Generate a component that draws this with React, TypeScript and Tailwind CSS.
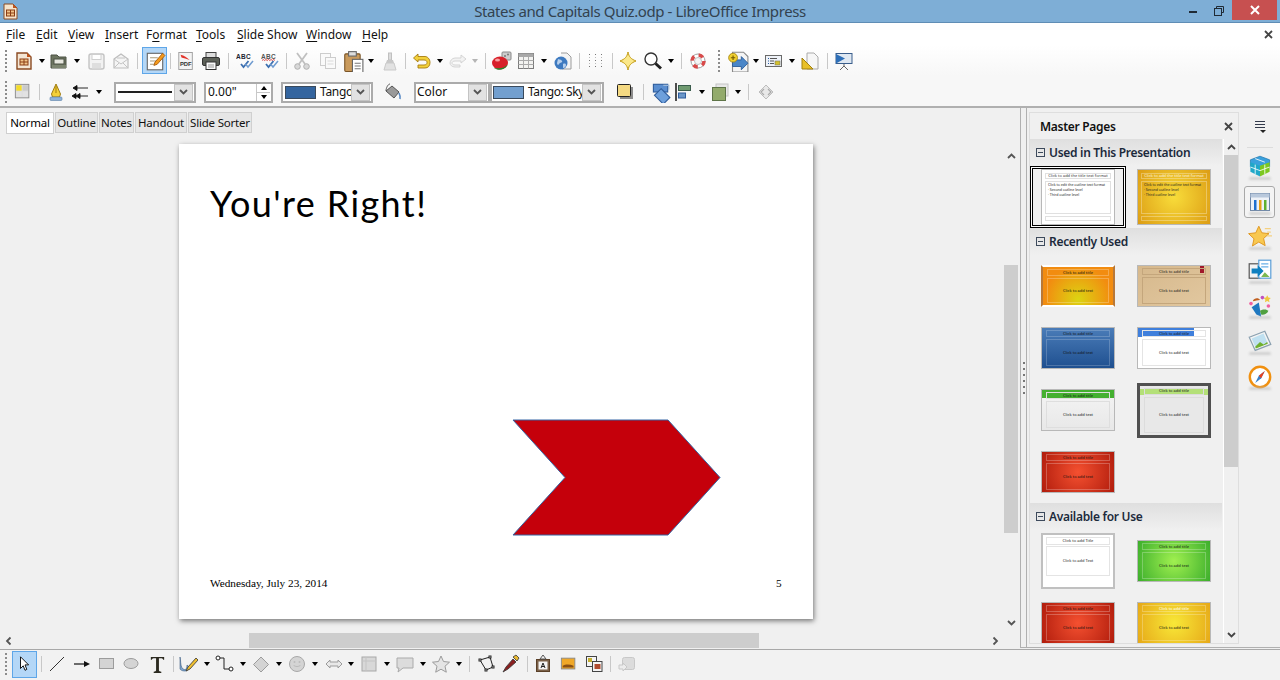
import React from "react";

const Cell = ({ w, children, className = "" }: { w: string; children?: React.ReactNode; className?: string }) => (
  <div className={`${w} h-full shrink-0 flex items-center justify-center ${className}`}>{children}</div>
);
const Arrow = ({ w, off }: { w: string; off?: boolean }) => (
  <Cell w={w}>
    <div className={`w-0 h-0 border-l-[3.5px] border-r-[3.5px] border-t-[4px] border-l-transparent border-r-transparent ${off ? "border-t-[#b5b5b5]" : "border-t-black"}`} />
  </Cell>
);
const Sep = ({ w }: { w: string }) => (
  <Cell w={w}>
    <div className="w-px h-[16px] bg-[#c8c8c8]" />
  </Cell>
);
const Handle = ({ w }: { w: string }) => (
  <Cell w={w}>
    <div className="flex flex-col gap-[2px]">
      {[0, 1, 2, 3, 4, 5].map((i) => (
        <div key={i} className="w-[2px] h-[2px] bg-[#8c8c8c]" />
      ))}
    </div>
  </Cell>
);
const S = ({ s = 20, children }: { s?: number; children: React.ReactNode }) => (
  <svg width={s} height={s} viewBox="0 0 20 20" fill="none">
    {children}
  </svg>
);

const Doc = () => (
  <S>
    <path d="M3 2h10l4 4v12H3z" fill="#f4e6d4" stroke="#8a4a22" strokeWidth="1.4" />
    <path d="M13 2l4 4h-4z" fill="#c0541c" />
    <rect x="6" y="8" width="8" height="6" fill="#f2c48a" stroke="#8a3c14" />
    <path d="M6 11h8M10 8v6" stroke="#8a3c14" />
  </S>
);
const Open = () => (
  <S>
    <path d="M2 4h6l2 2h7v11H2z" fill="#6d7560" stroke="#4c5244" />
    <rect x="5" y="8" width="10" height="5" fill="#e8e8e0" stroke="#4c5244" />
    <rect x="3" y="14" width="14" height="3" fill="#7d8570" />
  </S>
);
const Save = () => (
  <S>
    <rect x="3" y="3" width="15" height="15" rx="2" fill="#f2f2f2" stroke="#c4c4c4" strokeWidth="1.4" />
    <rect x="6" y="3.500" width="9" height="5" fill="#fff" stroke="#cfcfcf" />
    <rect x="6" y="12" width="9" height="5.500" fill="#dedede" />
  </S>
);
const Mail = () => (
  <S>
    <path d="M3 8l7-5 7 5v9H3z" fill="#f5f5f5" stroke="#bdbdbd" strokeWidth="1.2" />
    <path d="M3 8l7 5 7-5M3 17l5-5M17 17l-5-5M6 7h8" stroke="#c4c4c4" />
  </S>
);
const Edit = () => (
  <S s={22}>
    <rect x="3" y="3" width="14" height="15" fill="#fff" stroke="#666" />
    <path d="M5.500 7h7M5.500 10h6M5.500 13h4" stroke="#a89a7a" />
    <path d="M9 14l1-3 7-8 2 2-7 8z" fill="#f49a1c" stroke="#a85a08" strokeWidth=".8" />
  </S>
);
const Pdf = () => (
  <svg width="18" height="20" viewBox="0 0 20 22" fill="none">
    <rect x="2" y="1.500" width="15" height="19" fill="#f4f4f4" stroke="#9a9a9a" />
    <path d="M4 4c4 1 7 3 10 6-3-2-7-2-9-3z" fill="#e2332a" />
    <text x="3.200" y="17" fontSize="6.500" fontWeight="700" fill="#333" fontFamily="Liberation Sans">PDF</text>
  </svg>
);
const Print = () => (
  <S s={20}>
    <rect x="5" y="1.500" width="10" height="6" fill="#ddd" stroke="#444" />
    <rect x="1.500" y="6.500" width="17" height="8" rx="1.500" fill="#5c6058" stroke="#333" />
    <rect x="5" y="11" width="10" height="7.500" fill="#fafafa" stroke="#333" />
    <path d="M7 14h6M7 16h6" stroke="#999" />
  </S>
);
const Abc = ({ wave }: { wave?: boolean }) => (
  <svg width="18" height="17" viewBox="0 0 18 17" fill="none">
    <text x="0" y="6.500" fontSize="6.500" fontWeight="700" fill={wave ? "#555" : "#1c2430"} fontFamily="Liberation Sans" letterSpacing="0.300">ABC</text>
    {wave && <path d="M1 8.500l1.300-1 1.300 1 1.300-1 1.300 1 1.300-1 1.300 1 1.300-1 1.300 1 1.300-1 1.300 1" stroke="#d02020" strokeWidth=".8" />}
    <path d="M5 12l2.500 3 5-6" stroke="#3c6fb0" strokeWidth="1.800" fill="none" />
    <path d="M9.500 12l2.500 3 5-6" stroke="#6f9bd0" strokeWidth="1.500" fill="none" />
  </svg>
);
const Cut = () => (
  <S>
    <path d="M5 2l8 11M15 2L7 13" stroke="#c0c0c0" strokeWidth="1.800" />
    <circle cx="5.500" cy="15.500" r="2.800" fill="#d8d8d8" stroke="#b0b0b0" />
    <circle cx="14.500" cy="15.500" r="2.800" fill="#d8d8d8" stroke="#b0b0b0" />
  </S>
);
const Copy = () => (
  <S>
    <rect x="2.500" y="2.500" width="10" height="12" fill="#fafafa" stroke="#cdcdcd" />
    <rect x="7.500" y="6.500" width="10" height="11" fill="#fafafa" stroke="#cdcdcd" />
    <path d="M9.500 10h6M9.500 13h6" stroke="#dadada" />
  </S>
);
const Paste = () => (
  <S s={22}>
    <rect x="2.500" y="3.500" width="14" height="16" rx="1" fill="#c99a5c" stroke="#7a5426" />
    <rect x="6" y="1.500" width="7" height="4" fill="#ddd" stroke="#666" />
    <rect x="9.500" y="8.500" width="9.500" height="12" fill="#fff" stroke="#666" />
    <path d="M11.500 12h5.500M11.500 14.500h5.500M11.500 17h5.500" stroke="#777" />
  </S>
);
const Brush = () => (
  <S>
    <rect x="8.500" y="2" width="3" height="7" fill="#dcdcdc" stroke="#c0c0c0" />
    <path d="M7 9h6l1 3H6z" fill="#c8c8c8" />
    <path d="M6 12h8l2 7H4z" fill="#e2e2e2" stroke="#cacaca" />
  </S>
);
const Undo = () => (
  <S>
    <path d="M7 3L2.500 7 7 11V9h6c2 0 3 1 3 2.500S15 14 13 14H7v3h7c3 0 5-2 5-5.500S16.500 5.500 14 5.500H7z" fill="#f2d03a" stroke="#a67c10" strokeWidth=".9" />
  </S>
);
const Redo = () => (
  <S>
    <path d="M13 4l5 4-5 4v-2H7c-2 0-3 1-3 2s1 2 3 2h5v2H7c-3 0-5-2-5-4s2-5 5-5h6z" fill="#f2f2f2" stroke="#d0d0d0" strokeWidth=".9" />
  </S>
);
const Chart = () => (
  <svg width="22" height="20" viewBox="0 0 22 20" fill="none">
    <rect x="11" y="1" width="9" height="8" rx="1" fill="#ccc" stroke="#888" />
    <circle cx="14" cy="5" r="1" fill="#777" />
    <circle cx="17" cy="3.500" r="1" fill="#777" />
    <ellipse cx="9" cy="12" rx="8" ry="6.500" fill="#d8202a" />
    <path d="M3 17c4 3 10 2 13-2l1-3c-1 4-6 6-14 5z" fill="#1d8c2c" />
    <ellipse cx="6.500" cy="9" rx="2.500" ry="1.500" fill="#f8a0a0" />
  </svg>
);
const Table = () => (
  <S>
    <rect x="2.500" y="2.500" width="15" height="15" fill="#f3f3f1" stroke="#7c7c7c" />
    <rect x="2.500" y="2.500" width="15" height="3.500" fill="#a8a8a8" />
    <path d="M2.500 9.500h15M2.500 13.500h15M7.500 6v11.500M12.500 6v11.500" stroke="#aaa" />
  </S>
);
const Globe = () => (
  <S>
    <path d="M8 2h6l4 4v12H9" fill="#f4f4f4" stroke="#9c9c9c" />
    <circle cx="8" cy="12" r="6.500" fill="#3e7ac0" />
    <path d="M5 8c2 1 3 0 4 2s-2 1-3 3-2 0-2-1M10 13c2-1 3 0 3 1s-1 3-3 3z" fill="#b8d0ec" />
  </S>
);
const Grid = () => (
  <svg width="20" height="20" viewBox="0 0 20 20">
    {[3, 9, 15].map((y) => [3, 9, 15].map((x) => <rect key={`${x}-${y}`} x={x} y={y} width="1" height="1" fill="#777" />))}
    {[6, 12].map((y) => [3, 9, 15].map((x) => <rect key={`a${x}-${y}`} x={x} y={y} width="1" height="1" fill="#bbb" />))}
  </svg>
);
const Spark = () => (
  <S>
    <path d="M10 1c1 5 3 7 8 9-5 2-7 4-8 9-1-5-3-7-8-9 5-2 7-4 8-9z" fill="#fbe88a" stroke="#c29a10" />
  </S>
);
const Zoom = () => (
  <S>
    <circle cx="8" cy="8" r="6" fill="#fff" stroke="#333" strokeWidth="1.400" />
    <path d="M12.500 12.500l5.500 5" stroke="#222" strokeWidth="3" />
  </S>
);
const Help = () => (
  <S>
    <circle cx="10" cy="10" r="7" fill="#fff" stroke="#a0a0a0" strokeWidth="1" />
    <circle cx="10" cy="10" r="6" stroke="#d84a4a" strokeWidth="3.500" strokeDasharray="4.700 4.700" />
    <circle cx="10" cy="10" r="3.500" fill="#f5f5f5" stroke="#999" strokeWidth=".6" />
  </S>
);
const NavIcon = () => (
  <S s={22}>
    <path d="M5 2h10l4 4v14H5z" fill="#f5f5f5" stroke="#888" />
    <path d="M5 9h8V6l6 6-6 6v-3H5z" fill="#4a86c8" stroke="#2a5c98" strokeWidth=".8" />
    <circle cx="5.500" cy="7" r="4" fill="#f0d030" stroke="#a88810" strokeWidth=".8" />
    <path d="M3.500 7h4M5.500 5v4" stroke="#705800" />
  </S>
);
const ListBox = () => (
  <S>
    <rect x="1.500" y="4.500" width="16" height="11" fill="#eef2f8" stroke="#6a6a6a" />
    <path d="M4 7.500h1M4 10h1M4 12.500h1" stroke="#2a5ca0" />
    <path d="M6 7.500h7M6 10h4M6 12.500h4" stroke="#555" />
    <rect x="11" y="10" width="5" height="4" fill="#d4c02c" stroke="#776" strokeWidth=".6" />
  </S>
);
const Ruler = () => (
  <S s={20}>
    <path d="M7 2h7l4 4v12H7z" fill="#f6f6f6" stroke="#aaa" />
    <path d="M2 18V7l11 11z" fill="#e8c028" stroke="#a08010" />
  </S>
);
const Present = () => (
  <S s={20}>
    <rect x="2" y="2.500" width="16" height="10" fill="#dfe8f2" stroke="#3a5e8c" />
    <path d="M2 3l9 4.500-9 5z" fill="#2e6fb8" />
    <path d="M10 13v2M10 15l-4 4M10 15l4 4" stroke="#666" />
  </S>
);
const Areas = () => (
  <S s={18}>
    <rect x="1.500" y="1.500" width="15" height="15" fill="#ddd" stroke="#8a8a8a" />
    <rect x="2.500" y="2.500" width="6" height="6" fill="#f4dc28" />
    <rect x="9.500" y="2.500" width="6" height="6" fill="#cacaca" />
    <rect x="2.500" y="9.500" width="6" height="6" fill="#e2e2e2" />
    <rect x="9.500" y="9.500" width="6" height="6" fill="#e2e2e2" />
  </S>
);
const Pen = () => (
  <S>
    <path d="M10 2l4.500 10-1 3h-7l-1-3z" fill="#f4d038" stroke="#a07c10" />
    <path d="M10 4v7" stroke="#a07c10" />
    <rect x="4" y="15" width="12" height="3.500" rx="1" fill="#8fb2d8" stroke="#5a80a8" strokeWidth=".6" />
  </S>
);
const ArrowStyles = () => (
  <S>
    <path d="M3 6l4-2.500v5zM7 6h11M2 14l4-2.500v5zM6 14l4-2.500v5zM10 14h8" fill="#111" stroke="#111" strokeWidth=".9" />
  </S>
);
const Bucket = () => (
  <S>
    <path d="M4 9l6-5 7 6-5 6z" fill="#9a9a9a" stroke="#555" />
    <path d="M4 9c0-3 2-7 4-7" stroke="#555" />
    <path d="M17 11c1 2 1.500 4 1 6" stroke="#5a8ac4" strokeWidth="1.600" />
  </S>
);
const Shadow = () => (
  <S>
    <rect x="5" y="5" width="13" height="12" fill="#8c8c8c" />
    <rect x="2.500" y="2.500" width="13" height="12" rx="1" fill="#f4d982" stroke="#222" />
  </S>
);
const Rotate = () => (
  <S s={22}>
    <rect x="4" y="3" width="13" height="7" fill="#5a8ed0" stroke="#2e5c9c" />
    <path d="M11 7l8 8-6 6-8-8z" fill="#6ea0dc" stroke="#2e5c9c" />
    <path d="M13 4h5v4" stroke="#9cb8d8" />
  </S>
);
const Align = () => (
  <S>
    <path d="M3 1v18" stroke="#222" strokeWidth="1.600" />
    <rect x="5.500" y="3.500" width="12" height="5" fill="#6f9a70" stroke="#3a5c4c" />
    <rect x="5.500" y="11" width="7" height="5" fill="#6a96c8" stroke="#2e5c9c" />
  </S>
);
const Arrange = () => (
  <S>
    <rect x="6" y="2" width="12" height="12" fill="#e8e8e8" stroke="#c4c4c4" />
    <rect x="2.500" y="5.500" width="13" height="13" fill="#93ab6c" stroke="#5e7448" />
  </S>
);
const Glue = () => (
  <S>
    <path d="M10 3l7 7-7 7-7-7z" fill="#e8e8e8" stroke="#bdbdbd" />
    <path d="M8 7l-3 3 3 3M12 7l3 3-3 3" stroke="#aaa" fill="none" strokeWidth="1.200" />
  </S>
);

const Chev = ({ c = "#555" }: { c?: string }) => (
  <svg width="9" height="6" viewBox="0 0 9 6" fill="none">
    <path d="M1 1l3.500 3.500L8 1" stroke={c} strokeWidth="1.800" />
  </svg>
);
const Drop = () => (
  <div className="w-[19px] h-[17px] mr-[1px] bg-[#e2e2e2] border border-[#c4c4c4] flex items-center justify-center shrink-0">
    <Chev />
  </div>
);

const Thumb = ({ size = "w-[74px] h-[42px]", bc = "border border-[#b8b8b8]", bg, title, body, tc = "text-[#111]", frame = "border-white/25", inner }: { size?: string; bc?: string; bg: string; title: string; body: string; tc?: string; frame?: string; inner?: React.ReactNode }) => (
  <div className={`${size} ${bg} ${bc} flex flex-col items-stretch px-[4px] py-[2px] gap-[2px] overflow-hidden relative`}>
    {inner}
    <div className={`h-[7px] border ${frame} flex items-center justify-center text-[4px] leading-none ${tc} relative`}>{title}</div>
    <div className={`flex-1 border ${frame} flex items-center justify-center text-[4px] leading-none text-[#111] relative`}>{body}</div>
  </div>
);
const SecHead = ({ t }: { t: string }) => (
  <div className="h-[27px] shrink-0 bg-gradient-to-b from-[#dfdfdf] to-[#f0f0f0] flex items-center pl-[6px]">
    <div className="w-[9px] h-[9px] border border-[#3d4a5c] flex items-center justify-center">
      <div className="w-[5px] h-px bg-[#3d4a5c]" />
    </div>
    <span className="ml-[4px] text-[12px] font-semibold tracking-[-0.3px] text-[#1c2a3c]">{t}</span>
  </div>
);
const Row = ({ children }: { children: React.ReactNode }) => <div className="h-[62px] shrink-0 flex">{children}</div>;
const Slot = ({ children }: { children?: React.ReactNode }) => <div className="w-[96px] flex items-center justify-center">{children}</div>;

const DeckBox = ({ active, children }: { active?: boolean; children: React.ReactNode }) => (
  <div className={`w-[31px] h-[32px] shrink-0 flex flex-col items-center justify-center rounded-[3px] ${active ? "border border-[#a8a8a8] bg-[#f4f4f4]" : ""}`}>
    {children}
    <div className="w-[22px] h-[3px] -mt-[2px] rounded-full bg-[#bdbdbd]/60 blur-[1px]" />
  </div>
);

const Menu = ({ w, pre = "", u, post = "" }: { w: string; pre?: string; u: string; post?: string }) => (
  <div className={`${w} shrink-0`}>
    {pre}
    <span className="underline underline-offset-2">{u}</span>
    {post}
  </div>
);

const Tab = ({ w, t, active }: { w: string; t: string; active?: boolean }) => (
  <div className={`${w} shrink-0 flex items-center justify-center text-[11.5px] tracking-[-0.2px] whitespace-nowrap border border-[#d0d0d0] ${active ? "h-[22px] bg-white text-black" : "h-[21px] bg-[#e6e6e6] text-[#111]"}`}>{t}</div>
);

const Select = ({ w, children }: { w: string; children: React.ReactNode }) => (
  <div className={`${w} h-[21px] shrink-0 border-2 border-[#ababab] bg-white flex items-center overflow-hidden`}>
    <div className="flex-1 min-w-0 flex items-center overflow-hidden whitespace-nowrap h-full">{children}</div>
    <Drop />
  </div>
);

export default function App() {
  return (
    <div className="w-[1280px] h-[680px] overflow-hidden flex flex-col bg-[#f0f0f0] text-black font-['Noto_Sans',sans-serif]">
      {/* title bar */}
      <div className="h-[23px] shrink-0 bg-[#7eaed6] border-b border-[#5f8db5] flex items-center">
        <div className="w-[20px] pl-[3px] flex items-center">
          <svg width="15" height="17" viewBox="0 0 15 17" fill="none">
            <path d="M1 1h9l4 4v11H1z" fill="#f6e4cc" stroke="#8a4a22" />
            <path d="M10 1l4 4h-4z" fill="#c0541c" />
            <rect x="3.500" y="7" width="8" height="6" fill="#f2c48a" stroke="#8a3c14" />
            <path d="M3.500 10h8M7.500 7v6" stroke="#8a3c14" />
          </svg>
        </div>
        <div className="flex-1 pl-[80px] text-center text-[15px] leading-none text-[#33424f] tracking-[-0.4px] whitespace-nowrap">States and Capitals Quiz.odp - LibreOffice Impress</div>
        <div className="flex items-start h-full self-start">
          <div className="w-[26px] h-[21px] flex items-center justify-center">
            <div className="w-[8px] h-[2px] bg-[#1f2a35] mt-[3px]" />
          </div>
          <div className="w-[26px] h-[21px] flex items-center justify-center">
            <svg width="10" height="10" viewBox="0 0 10 10" fill="none">
              <path d="M2.500 2.500V.5h7v6H7.500" stroke="#1f2a35" />
              <rect x=".5" y="2.500" width="7" height="7" stroke="#1f2a35" />
            </svg>
          </div>
          <div className="w-[45px] h-[20px] bg-[#c75050] flex items-center justify-center">
            <svg width="10" height="10" viewBox="0 0 10 10" fill="none">
              <path d="M1 1l8 8M9 1L1 9" stroke="#fff" strokeWidth="2" />
            </svg>
          </div>
          <div className="w-[3px]" />
        </div>
      </div>
      {/* menu */}
      <div className="h-[22px] shrink-0 bg-white flex items-center pl-[6px] pr-[7px] pt-[1px] text-[12px] text-[#111]">
        <Menu w="w-[30px]" u="F" post="ile" />
        <Menu w="w-[32px]" u="E" post="dit" />
        <Menu w="w-[37px]" u="V" post="iew" />
        <Menu w="w-[41px]" u="I" post="nsert" />
        <Menu w="w-[50px]" pre="F" u="o" post="rmat" />
        <Menu w="w-[41px]" u="T" post="ools" />
        <Menu w="w-[69px]" u="S" post="lide Show" />
        <Menu w="w-[56px]" u="W" post="indow" />
        <Menu w="w-[40px]" u="H" post="elp" />
        <div className="flex-1" />
        <svg width="9" height="9" viewBox="0 0 9 9" fill="none">
          <path d="M1 1l7 7M8 1L1 8" stroke="#444" strokeWidth="1.800" />
        </svg>
      </div>
      {/* toolbar 1 */}
      <div className="h-[31px] shrink-0 bg-gradient-to-b from-white to-[#f7f7f7] flex items-center">
        <Handle w="w-[12px]" />
        <Cell w="w-[24px]"><Doc /></Cell>
        <Arrow w="w-[11px]" />
        <Cell w="w-[24px]"><Open /></Cell>
        <Arrow w="w-[12px]" />
        <Cell w="w-[26px]"><Save /></Cell>
        <Cell w="w-[24px]"><Mail /></Cell>
        <Sep w="w-[9px]" />
        <Cell w="w-[25px]"><div className="w-[25px] h-[27px] bg-[#b4d7f7] border border-[#5ea6e8] flex items-center justify-center"><Edit /></div></Cell>
        <Sep w="w-[6px]" />
        <Cell w="w-[26px]"><Pdf /></Cell>
        <Cell w="w-[24px]"><Print /></Cell>
        <Sep w="w-[10px]" />
        <Cell w="w-[24px]"><Abc /></Cell>
        <Cell w="w-[26px]"><Abc wave /></Cell>
        <Sep w="w-[6px]" />
        <Cell w="w-[26px]"><Cut /></Cell>
        <Cell w="w-[26px]"><Copy /></Cell>
        <Cell w="w-[24px]"><Paste /></Cell>
        <Arrow w="w-[12px]" />
        <Cell w="w-[26px]"><Brush /></Cell>
        <Sep w="w-[5px]" />
        <Cell w="w-[26px]"><Undo /></Cell>
        <Arrow w="w-[11px]" />
        <Cell w="w-[25px]"><Redo /></Cell>
        <Arrow w="w-[10px]" off />
        <Sep w="w-[10px]" />
        <Cell w="w-[24px]"><Chart /></Cell>
        <Cell w="w-[24px]"><Table /></Cell>
        <Arrow w="w-[12px]" />
        <Cell w="w-[26px]"><Globe /></Cell>
        <Sep w="w-[6px]" />
        <Cell w="w-[28px]"><Grid /></Cell>
        <Sep w="w-[4px]" />
        <Cell w="w-[28px]"><Spark /></Cell>
        <Cell w="w-[22px]"><Zoom /></Cell>
        <Arrow w="w-[14px]" />
        <Sep w="w-[6px]" />
        <Cell w="w-[28px]"><Help /></Cell>
        <Handle w="w-[14px]" />
        <Cell w="w-[24px]"><NavIcon /></Cell>
        <Arrow w="w-[12px]" />
        <Cell w="w-[24px]"><ListBox /></Cell>
        <Arrow w="w-[12px]" />
        <Cell w="w-[24px]"><Ruler /></Cell>
        <Sep w="w-[10px]" />
        <Cell w="w-[24px]"><Present /></Cell>
      </div>
      {/* toolbar 2 */}
      <div className="h-[32px] pt-[2px] shrink-0 bg-[#f7f7f7] border-b-2 border-[#b0b0b0] flex items-center text-[12px] text-[#111]">
        <Handle w="w-[12px]" />
        <Cell w="w-[22px]"><Areas /></Cell>
        <Sep w="w-[11px]" />
        <Cell w="w-[22px]"><Pen /></Cell>
        <Cell w="w-[26px]"><ArrowStyles /></Cell>
        <Arrow w="w-[11px]" />
        <div className="w-[10px]" />
        <Select w="w-[82px]">
          <div className="w-full h-[2px] bg-[#222] ml-[2px] mr-[2px]" />
        </Select>
        <div className="w-[8px]" />
        <div className="w-[69px] h-[21px] shrink-0 border-2 border-[#ababab] bg-white flex items-center pl-[2px]">
          <span className="flex-1">0.00"</span>
          <div className="w-[14px] h-full border-l border-[#c8c8c8] flex flex-col items-center justify-center gap-[2px] mr-[1px]">
            <div className="w-0 h-0 border-l-[3.5px] border-r-[3.5px] border-b-[4px] border-l-transparent border-r-transparent border-b-black" />
            <div className="w-full h-px bg-[#c8c8c8]" />
            <div className="w-0 h-0 border-l-[3.5px] border-r-[3.5px] border-t-[4px] border-l-transparent border-r-transparent border-t-black" />
          </div>
        </div>
        <div className="w-[8px]" />
        <Select w="w-[92px]">
          <div className="w-[31px] h-[13px] ml-[2px] mr-[4px] bg-[#34659f] border border-[#3a4a5c] shrink-0" />
          <span className="tracking-[-0.3px]">Tango</span>
        </Select>
        <Cell w="w-[41px]" className="pr-[3px]"><Bucket /></Cell>
        <Select w="w-[76px]">
          <span className="pl-[1px]">Color</span>
        </Select>
        <Select w="w-[114px]">
          <div className="w-[31px] h-[13px] ml-[1px] mr-[4px] bg-[#729fcf] border border-[#3a4a5c] shrink-0" />
          <span className="tracking-[-0.4px]">Tango: Sky</span>
        </Select>
        <div className="w-[9px]" />
        <Cell w="w-[24px]"><Shadow /></Cell>
        <Sep w="w-[12px]" />
        <Cell w="w-[22px]"><Rotate /></Cell>
        <Cell w="w-[24px]"><Align /></Cell>
        <Arrow w="w-[14px]" />
        <Cell w="w-[22px]"><Arrange /></Cell>
        <Arrow w="w-[14px]" />
        <Sep w="w-[6px]" />
        <Cell w="w-[30px]"><Glue /></Cell>
      </div>
      {/* main */}
      <div className="h-[542px] shrink-0 flex border-b border-[#a8a8a8]">
        {/* editor */}
        <div className="w-[1020px] shrink-0 flex flex-col">
          <div className="h-[26px] shrink-0 pl-[6px] pt-[4px] flex items-start gap-px">
            <Tab w="w-[48px]" t="Normal" active />
            <Tab w="w-[43px]" t="Outline" />
            <Tab w="w-[35px]" t="Notes" />
            <Tab w="w-[52px]" t="Handout" />
            <Tab w="w-[64px]" t="Slide Sorter" />
          </div>
          <div className="h-[499px] shrink-0 flex">
            <div className="w-[1004px] shrink-0 pl-[179px] pt-[10px]">
              <div className="w-[634px] h-[475px] bg-white shadow-[1px_2px_5px_rgba(0,0,0,0.5)] relative">
                <div className="absolute left-[31px] top-[36px] text-[36px] leading-[46px] text-black font-['Lato',sans-serif] tracking-[1.4px] whitespace-nowrap">You're Right!</div>
                <svg className="absolute left-[333px] top-[275px]" width="209" height="118" viewBox="0 0 209 118">
                  <path d="M1 1H156L208 58.500 156 116H1L53 58.500z" fill="#c5000b" stroke="#3465a4" strokeWidth="1" />
                </svg>
                <div className="absolute left-[31px] top-[431px] text-[11.25px] leading-[16px] font-['Liberation_Serif',serif] whitespace-nowrap">Wednesday, July 23, 2014</div>
                <div className="absolute left-[597px] top-[431px] text-[11.25px] leading-[16px] font-['Liberation_Serif',serif]">5</div>
              </div>
            </div>
            <div className="w-[14px] shrink-0 flex flex-col items-center">
              <div className="h-[16px]" />
              <div className="h-[12px] flex items-center rotate-180"><Chev /></div>
              <div className="h-[103px] shrink-0" />
              <div className="w-full h-[268px] shrink-0 bg-[#cdcdcd]" />
              <div className="h-[84px] shrink-0" />
              <div className="h-[12px] flex items-center"><Chev /></div>
            </div>
          </div>
          <div className="h-[15px] shrink-0 flex items-center">
            <div className="w-[249px] shrink-0 pl-[4px]">
              <div className="w-[9px] flex justify-center rotate-90"><Chev /></div>
            </div>
            <div className="w-[510px] h-[15px] shrink-0 bg-[#cdcdcd]" />
            <div className="w-[232px]" />
            <div className="w-[9px] flex justify-center -rotate-90"><Chev /></div>
          </div>
        </div>
        <div className="h-[540px] shrink-0 flex border-b border-[#b0b0b0]">
          {/* splitter */}
          <div className="w-[9px] shrink-0 flex items-center pl-[1px] border-l border-[#b0b0b0]">
            <div className="h-full w-[5px] border-r border-[#b0b0b0] flex flex-col items-center justify-center gap-[4px]">
              {[0, 1, 2, 3, 4, 5].map((i) => (
                <div key={i} className="w-[2px] h-[2px] bg-[#777]" />
              ))}
            </div>
          </div>
          {/* panel */}
          <div className="w-[210px] shrink-0 mt-[4px] mb-[3px] border border-[#dedede] flex flex-col">
            <div className="h-[26px] shrink-0 pt-[1px] flex items-center pl-[10px] pr-[5px] text-[12px] font-semibold tracking-[-0.3px] text-[#111]">
              <span className="flex-1">Master Pages</span>
              <svg width="9" height="9" viewBox="0 0 9 9" fill="none">
                <path d="M1 1l7 7M8 1L1 8" stroke="#444" strokeWidth="1.800" />
              </svg>
            </div>
            <div className="flex-1 min-h-0 flex overflow-hidden">
              <div className="w-[192px] shrink-0 flex flex-col overflow-hidden">
                <SecHead t="Used in This Presentation" />
                <Row>
                  <Slot>
                    <div className="w-[96px] h-[62px] border border-black flex items-center justify-center">
                      <div className="w-[94px] h-[60px] border border-white flex items-center justify-center">
                        <div className="w-[92px] h-[58px] border border-black flex items-center justify-center">
                          <div className="w-[74px] h-[56px] bg-white border border-[#b8b8b8] flex flex-col px-[3px] py-[3px] gap-[2px] overflow-hidden">
                            <div className="h-[6px] border border-[#e0e0e0] text-[4px] leading-none text-center text-[#333] whitespace-nowrap">Click to add the title text format</div>
                            <div className="flex-1 border border-[#e0e0e0] text-[3.500px] leading-[5px] text-[#222] pl-[2px]">Click to edit the outline text format<br />· Second outline level<br />· Third outline level</div>
                            <div className="h-[5px] border border-[#e0e0e0]" />
                          </div>
                        </div>
                      </div>
                    </div>
                  </Slot>
                  <Slot>
                    <div className="w-[74px] h-[56px] bg-[radial-gradient(circle,#f8dc3a,#dc9c14)] border border-[#b8b8b8] flex flex-col px-[3px] py-[3px] gap-[2px] overflow-hidden">
                      <div className="h-[6px] border border-white/30 text-[4px] leading-none text-center text-white/80 whitespace-nowrap">Click to add the title text format</div>
                      <div className="flex-1 border border-white/30 text-[3.500px] leading-[5px] text-[#222] pl-[2px]">Click to edit the outline text format<br />· Second outline level<br />· Third outline level</div>
                      <div className="h-[5px] border border-white/30" />
                    </div>
                  </Slot>
                </Row>
                <SecHead t="Recently Used" />
                <Row>
                  <Slot>
                    <Thumb bg="bg-[radial-gradient(circle_at_50%_85%,#dcd412,#f28c10_70%)]" bc="border-2 border-l-[#b87838] border-r-[#b87838] border-t-white border-b-white" title="Click to add title" body="Click to add text" />
                  </Slot>
                  <Slot>
                    <Thumb bg="bg-gradient-to-br from-[#d6b88c] to-[#e2c8a0]" title="Click to add title" body="Click to add text" frame="border-[#c4a67c]" inner={<div className="absolute right-[6px] top-0 w-[4px] h-[7px] bg-[#a0182a]" />} />
                  </Slot>
                </Row>
                <Row>
                  <Slot><Thumb bg="bg-gradient-to-b from-[#4a7cb8] to-[#1f5090]" title="Click to add title" body="Click to add text" frame="border-white/20" /></Slot>
                  <Slot><Thumb bg="bg-white" title="Click to add title" body="Click to add text" frame="border-[#e4e4e4]" inner={<div className="absolute left-0 top-0 w-[56px] h-[9px] bg-[#3f7fdc]" />} /></Slot>
                </Row>
                <Row>
                  <Slot><Thumb bg="bg-gradient-to-b from-[#f4f4f4] to-[#e8e8e8]" title="Click to add title" body="Click to add text" frame="border-[#dedede]" inner={<div className="absolute left-0 top-0 w-full h-[8px] bg-[#44b030]" />} /></Slot>
                  <Slot><Thumb size="w-[74px] h-[55px]" bc="border-[3px] border-[#505050]" bg="bg-[#e8e8e8]" title="Click to add title" body="Click to add text" frame="border-[#dcdcdc]" inner={<div className="absolute left-0 top-[3px] w-full h-[6px] bg-[#b4e078]" />} /></Slot>
                </Row>
                <Row>
                  <Slot><Thumb bg="bg-[radial-gradient(circle,#f45030,#b01c0c)]" title="Click to add title" body="Click to add text" /></Slot>
                  <Slot />
                </Row>
                <SecHead t="Available for Use" />
                <Row>
                  <Slot>
                    <div className="w-[74px] h-[56px] bg-white border-2 border-[#c0c0c0] flex flex-col px-[3px] py-[2px] gap-[1px]">
                      <div className="h-[8px] border border-[#e4e4e4] text-[4px] leading-none flex items-center justify-center text-[#222]">Click to add Title</div>
                      <div className="h-[30px] border border-[#e4e4e4] text-[4px] leading-none flex items-center justify-center text-[#222]">Click to add Text</div>
                    </div>
                  </Slot>
                  <Slot><Thumb bg="bg-[radial-gradient(circle,#a0f050,#3cae2c)]" title="Click to add title" body="Click to add text" /></Slot>
                </Row>
                <Row>
                  <Slot><Thumb bg="bg-[radial-gradient(circle,#f45030,#b01c0c)]" title="Click to add title" body="Click to add text" /></Slot>
                  <Slot><Thumb bg="bg-[radial-gradient(circle,#f8e838,#e6a818)]" title="Click to add title" tc="text-white" body="Click to add text" /></Slot>
                </Row>
              </div>
              <div className="w-[15px] ml-px shrink-0 border-l border-white flex flex-col items-center">
                <div className="h-[16px] shrink-0 flex items-center rotate-180"><Chev c="#444" /></div>
                <div className="w-full h-[312px] shrink-0 bg-[#cdcdcd]" />
                <div className="flex-1" />
                <div className="h-[16px] shrink-0 flex items-center"><Chev c="#444" /></div>
              </div>
            </div>
          </div>
          {/* deck */}
          <div className="w-[41px] shrink-0 flex flex-col items-center pt-[9px]">
            <div className="h-[20px] shrink-0 flex flex-col items-center justify-center gap-[2px]">
              <div className="w-[10px] h-px bg-[#333a4c]" />
              <div className="w-[10px] h-px bg-[#333a4c]" />
              <div className="w-[10px] h-px bg-[#333a4c]" />
              <div className="w-0 h-0 ml-[6px] border-l-[3px] border-r-[3px] border-t-[3px] border-l-transparent border-r-transparent border-t-[#222]" />
            </div>
            <div className="w-[26px] h-px shrink-0 bg-[#dcdcdc] mt-[10px] mb-[3px]" />
            <DeckBox>
              <S s={24}>
                <path d="M10 1l8 3v6l-8 3-8-3V4z" fill="#3aa0dc" stroke="#1e78b0" strokeWidth=".6" />
                <path d="M10 9l8-3v8l-8 4z" fill="#7cc820" />
                <path d="M2 6l8 3v9l-8-4z" fill="#20a8c8" />
                <path d="M6 3l8 3M6 8v8M14 8v8M2 10l8 3 8-3" stroke="#fff" strokeWidth=".7" />
              </S>
            </DeckBox>
            <div className="h-[3px] shrink-0" />
            <DeckBox active>
              <svg width="24" height="24" viewBox="0 0 24 24" fill="none">
                <rect x="2.500" y="3.500" width="19" height="17" fill="#eef2f8" stroke="#7088a8" />
                <rect x="2.500" y="3.500" width="19" height="4" fill="#b8c8dc" />
                <rect x="6" y="10" width="2.500" height="10" fill="#2070d0" />
                <rect x="11" y="10" width="2.500" height="10" fill="#e8a018" />
                <rect x="16" y="10" width="2.500" height="10" fill="#60b030" />
              </svg>
            </DeckBox>
            <div className="h-[3px] shrink-0" />
            <DeckBox>
              <S s={24}>
                <path d="M9 1l2.500 5.500 6 .7-4.500 4 1.300 6L9 14.200 3.700 17.500 5 11.500.5 7.200l6-.7z" fill="#f8c850" stroke="#e09820" strokeWidth=".8" />
                <path d="M14 3h5M16 6h3M16 9h4" stroke="#f4d080" />
              </S>
            </DeckBox>
            <div className="h-[2px] shrink-0" />
            <DeckBox>
              <S s={24}>
                <rect x="1" y="4" width="9" height="12" fill="#f4f4f4" stroke="#555" />
                <rect x="9" y="1" width="10" height="15" fill="#fff" stroke="#5a9ed8" />
                <path d="M11 4h6M11 6.500h6" stroke="#6ab0e8" />
                <path d="M3 8h5V5l5 5-5 5v-3H3z" fill="#0f80c0" />
                <path d="M11 15l3-4 4 4z" fill="#7cb850" />
              </S>
            </DeckBox>
            <div className="h-[3px] shrink-0" />
            <DeckBox>
              <S s={24}>
                <path d="M3 11l6-4 2 12-4-2z" fill="#1e78c0" />
                <path d="M4 6c1-3 5-3 6-1-2 0-4 1-6 1z" fill="#c06020" />
                <path d="M10 14c3-2 6-1 7 0-1 3-5 4-6 3z" fill="#50a040" />
                <path d="M16 1l1 2 2 .3-1.500 1.500.4 2-1.900-1-1.900 1 .4-2L13 3.300l2-.3z" fill="#f0c840" />
                <circle cx="12" cy="3" r="1.500" fill="#c050c0" />
                <circle cx="2.500" cy="8" r="1.500" fill="#f060a0" />
                <circle cx="17" cy="10" r="1.500" fill="#f060a0" />
              </S>
            </DeckBox>
            <div className="h-[4px] shrink-0" />
            <DeckBox>
              <S s={24}>
                <path d="M1 6l13-5 5 11-13 5z" fill="#f4f4f4" stroke="#8aa0b0" />
                <path d="M3 7l10-4 3.500 8-10 4z" fill="#bfe0f0" />
                <path d="M6 14l4-4 3 2 3-2 .5 1.500-10 4z" fill="#70b030" />
              </S>
            </DeckBox>
            <div className="h-[3px] shrink-0" />
            <DeckBox>
              <S s={24}>
                <circle cx="10" cy="10" r="8.500" fill="#fff" stroke="#f09010" strokeWidth="2" />
                <path d="M14 5l-3 6-5 4 3-6z" fill="#3a80c8" />
                <path d="M14 5l-3 6-2-2z" fill="#e84020" />
              </S>
            </DeckBox>
          </div>
        </div>
      </div>
      {/* bottom toolbar */}
      <div className="h-[30px] pb-[2px] shrink-0 flex items-center bg-[#f2f2f2]">
        <Handle w="w-[12px]" />
        <Cell w="w-[25px]"><div className="w-[25px] h-[27px] bg-[#b4d7f7] border border-[#5ea6e8] flex items-center justify-center">
          <S s={18}><path d="M5 2v13l3-3 2 5 2-1-2-5h4z" fill="#fff" stroke="#000" /></S>
        </div></Cell>
        <Sep w="w-[8px]" />
        <Cell w="w-[24px]"><S><path d="M3 17L17 3" stroke="#333" /></S></Cell>
        <Cell w="w-[25px]"><S><path d="M2 10h11" stroke="#111" strokeWidth="1.200" /><path d="M12 7l6 3-6 3z" fill="#111" /></S></Cell>
        <Cell w="w-[24px]"><S><rect x="3.500" y="4.500" width="14" height="10" fill="#d4d4d4" stroke="#9c9c9c" /></S></Cell>
        <Cell w="w-[26px]"><S><ellipse cx="10" cy="9.500" rx="7" ry="5" fill="#d4d4d4" stroke="#9c9c9c" /></S></Cell>
        <Cell w="w-[26px]"><S s={19}><path d="M3 2h14v3h-1c-.5-1-1-1.500-3-1.500h-1.500V16c0 1 1 1.500 2.500 1.500V19H6v-1.500c1.500 0 2.500-.5 2.500-1.500V3.500H7c-2 0-2.500.5-3 1.500H3z" fill="#2c2a20" /></S></Cell>
        <Sep w="w-[6px]" />
        <Cell w="w-[24px]"><S s={20}><path d="M2 3c1 3 0 7 2 11 2 2 5 3 5-3 3 2 2 6-2 6-4 0-5-2-5-2z" fill="#7ea6d0" stroke="#3c5c80" strokeWidth=".6" /><path d="M8 17l2-4 8-9 2 2-8 9z" fill="#f0c030" stroke="#333" strokeWidth=".8" /></S></Cell>
        <Arrow w="w-[14px]" />
        <Cell w="w-[22px]"><S><path d="M3 4h6v11h7" stroke="#222" /><circle cx="3" cy="4" r="2" fill="#fff" stroke="#222" /><circle cx="16" cy="15" r="2" fill="#fff" stroke="#222" /></S></Cell>
        <Arrow w="w-[14px]" />
        <Cell w="w-[22px]"><S><path d="M10 3l7.500 7.500L10 18l-7.500-7.500z" fill="#d4d4d4" stroke="#9c9c9c" /></S></Cell>
        <Arrow w="w-[14px]" />
        <Cell w="w-[22px]"><S><circle cx="10" cy="10" r="7.500" fill="#d4d4d4" stroke="#a8a8a8" /><path d="M6.500 11c1 2 6 2 7 0" stroke="#bbb" /><circle cx="7.500" cy="8" r="1" fill="#bbb" /><circle cx="12.500" cy="8" r="1" fill="#bbb" /></S></Cell>
        <Arrow w="w-[14px]" />
        <Cell w="w-[24px]"><S><path d="M2 10l4-4v2h8V6l4 4-4 4v-2H6v2z" fill="#e8e8e8" stroke="#9c9c9c" /></S></Cell>
        <Arrow w="w-[10px]" />
        <Cell w="w-[26px]"><S><rect x="3" y="3" width="14" height="14" fill="#d8d8d8" stroke="#a8a8a8" /><path d="M3 7h14M7 3v14" stroke="#c4c4c4" /></S></Cell>
        <Arrow w="w-[10px]" />
        <Cell w="w-[26px]"><S s={20}><path d="M2 4h16v10H8l-5 4 1-4H2z" fill="#dcdcdc" stroke="#aaa" /></S></Cell>
        <Arrow w="w-[10px]" />
        <Cell w="w-[26px]"><S><path d="M10 2l2.500 5.500 6 .7-4.500 4 1.300 6L10 15.200 4.700 18.200 6 12.200 1.500 8.200l6-.7z" fill="#e4e4e4" stroke="#9c9c9c" /></S></Cell>
        <Arrow w="w-[10px]" />
        <Sep w="w-[10px]" />
        <Cell w="w-[24px]"><S><path d="M4 6l10-3 3 10-7 3z" stroke="#222" fill="none" /><rect x="3" y="5" width="2" height="2" fill="#fff" stroke="#222" /><rect x="13" y="2" width="2" height="2" fill="#fff" stroke="#222" /><rect x="16" y="12" width="2" height="2" fill="#fff" stroke="#222" /><rect x="9" y="15" width="2" height="2" fill="#fff" stroke="#222" /></S></Cell>
        <Cell w="w-[26px]"><S><path d="M2 18l3-5 7-8 3 3-8 7z" fill="#8a2020" stroke="#333" strokeWidth=".8" /><path d="M12 3l3-2 3 3-2 3z" fill="#e8b830" stroke="#333" strokeWidth=".8" /></S></Cell>
        <Sep w="w-[6px]" />
        <Cell w="w-[26px]"><S><rect x="3.500" y="5.500" width="13" height="12" fill="#7a6048" stroke="#5a4028" /><rect x="5.500" y="7.500" width="9" height="8" fill="#f4f4f4" /><path d="M10 1l3 4H7z" fill="none" stroke="#555" /><path d="M8 14l2-5 2 5M8.500 12.500h3" stroke="#222" /></S></Cell>
        <Cell w="w-[26px]"><S s={18}><rect x="1.500" y="3.500" width="15" height="12" fill="#f0a828" stroke="#888" /><path d="M3 12c3-2 8-2 12 0v2H3z" fill="#8a5014" /></S></Cell>
        <Cell w="w-[24px]"><S><rect x="2.500" y="2.500" width="10" height="10" fill="#f4f4f4" stroke="#444" /><rect x="4" y="4" width="4" height="4" fill="#c4b030" /><rect x="8.500" y="7.500" width="9.500" height="10" fill="#f4f4f4" stroke="#444" /><rect x="10.500" y="10" width="6" height="5" fill="#b04c30" /></S></Cell>
        <Sep w="w-[8px]" />
        <Cell w="w-[26px]"><S><rect x="5.500" y="3.500" width="12" height="12" rx="2" fill="#dcdcdc" stroke="#c8c8c8" /><path d="M2 11h4V9l4 4-4 4v-2H2z" fill="#ececec" stroke="#c8c8c8" /></S></Cell>
      </div>
    </div>
  );
}
